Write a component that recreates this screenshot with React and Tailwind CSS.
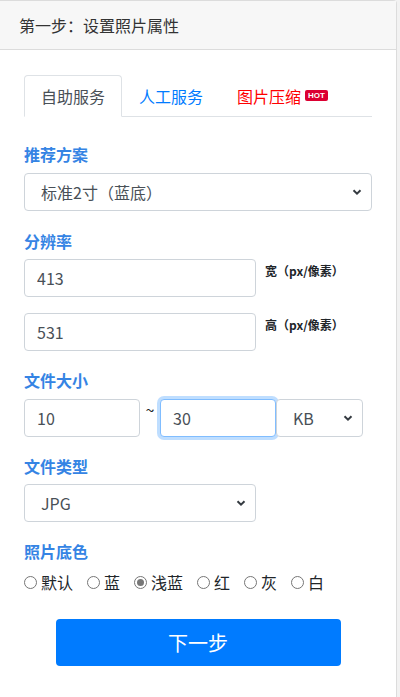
import { useState } from "react"

const font = { fontFamily: '"Noto Sans CJK SC", "Noto Sans", sans-serif' }

const Chevron = () => (
  <svg width="10" height="8" viewBox="0 0 10 8" className="pointer-events-none absolute right-[10px] top-1/2 -translate-y-1/2">
    <path d="M1.5 2.2 L5 5.6 L8.5 2.2" fill="none" stroke="#343a40" strokeWidth="2" />
  </svg>
)

const Select = ({ value, options, className }) => (
  <div className={"relative " + className}>
    <select
      defaultValue={value}
      className="w-full h-[38px] appearance-none rounded-[4px] border border-[#ced4da] bg-white pl-[16px] pr-8 text-[16px] text-[#495057] outline-none"
    >
      {options.map((o) => (
        <option key={o}>{o}</option>
      ))}
    </select>
    <Chevron />
  </div>
)

const Label = ({ children, className = "" }) => (
  <div className={"h-[24px] text-[16px] leading-6 font-bold text-[#3584e4] " + className}>{children}</div>
)

const Input = ({ value, focus, className = "" }) => (
  <input
    defaultValue={value}
    className={
      "h-[38px] rounded-[4px] border bg-white px-[12px] text-[16px] text-[#495057] outline-none " +
      (focus
        ? "border-[#80bdff] shadow-[0_0_0_3px_rgba(0,123,255,0.25)] "
        : "border-[#ced4da] ") +
      className
    }
  />
)

const colors = ["默认", "蓝", "浅蓝", "红", "灰", "白"]

const App = () => {
  const [color, setColor] = useState("浅蓝")

  return (
    <div className="min-h-[697px] w-[400px] bg-[#f2f2f2]" style={font}>
      <div className="w-[397px] min-h-[697px] rounded-tr-[4px] border-r border-t border-[#dcdcdc] bg-white">
        <div className="flex h-[49px] items-center border-b border-[#dcdcdc] bg-[#f7f7f7] pl-[19px] text-[16px] text-[#333]">
          第一步：设置照片属性
        </div>

        <div className="px-[24px] pt-[25px]">
          <div className="flex h-[42px] border-b border-[#dee2e6] text-[16px] leading-6">
            <div className="-mb-px flex h-[42px] items-center rounded-t-[4px] border border-[#dee2e6] border-b-white bg-white px-[16px] text-[#495057]">
              自助服务
            </div>
            <div className="flex h-[41px] items-center border border-transparent px-[16px] text-[#007bff]">人工服务</div>
            <div className="flex h-[41px] items-center border border-transparent px-[16px] text-[#ff0000]">
              图片压缩
              <span className="ml-[4px] rounded-[2px] bg-[#dc0032] px-[3px] text-[8px] leading-[11px] font-bold text-white" style={{ fontFamily: '"Liberation Sans", sans-serif' }}>
                HOT
              </span>
            </div>
          </div>

          <Label className="mt-[25px]">推荐方案</Label>
          <Select className="mt-[7px] w-[348px]" value="标准2寸（蓝底）" options={["标准2寸（蓝底）", "标准1寸（蓝底）"]} />

          <Label className="mt-[18px]">分辨率</Label>
          <div className="mt-[6px] flex items-start">
            <Input value="413" className="w-[232px]" />
            <span className="ml-[9px] mt-[3px] text-[12px] leading-[18px] font-bold text-[#212529]">宽（px/像素）</span>
          </div>
          <div className="mt-[16px] flex items-start">
            <Input value="531" className="w-[232px]" />
            <span className="ml-[9px] mt-[3px] text-[12px] leading-[18px] font-bold text-[#212529]">高（px/像素）</span>
          </div>

          <Label className="mt-[17px]">文件大小</Label>
          <div className="mt-[7px] flex h-[38px] items-start">
            <Input value="10" className="w-[116px]" />
            <span className="w-[20px] text-center text-[16px] leading-[20px] text-[#212529]">~</span>
            <Input value="30" focus className="w-[116px]" />
            <Select className="w-[87px]" value="KB" options={["KB", "MB"]} />
          </div>

          <Label className="mt-[17px]">文件类型</Label>
          <Select className="mt-[6px] w-[232px]" value="JPG" options={["JPG", "PNG"]} />

          <Label className="mt-[17px]">照片底色</Label>
          <div className="mt-[7px] flex h-[24px] items-center text-[16px] leading-6 text-[#212529]">
            {colors.map((c) => (
              <label key={c} className="mr-[14px] flex cursor-pointer items-center" onClick={() => setColor(c)}>
                <span className="mr-[4px] flex h-[13px] w-[13px] items-center justify-center rounded-full border border-[#767676] bg-white">
                  {color === c && <span className="h-[7px] w-[7px] rounded-full bg-[#777]" />}
                </span>
                {c}
              </label>
            ))}
          </div>

          <div className="mt-[25px] flex justify-center">
            <button className="h-[47px] w-[285px] rounded-[4px] bg-[#007bff] text-[20px] text-white">下一步</button>
          </div>
        </div>
      </div>
    </div>
  )
}

export default App
